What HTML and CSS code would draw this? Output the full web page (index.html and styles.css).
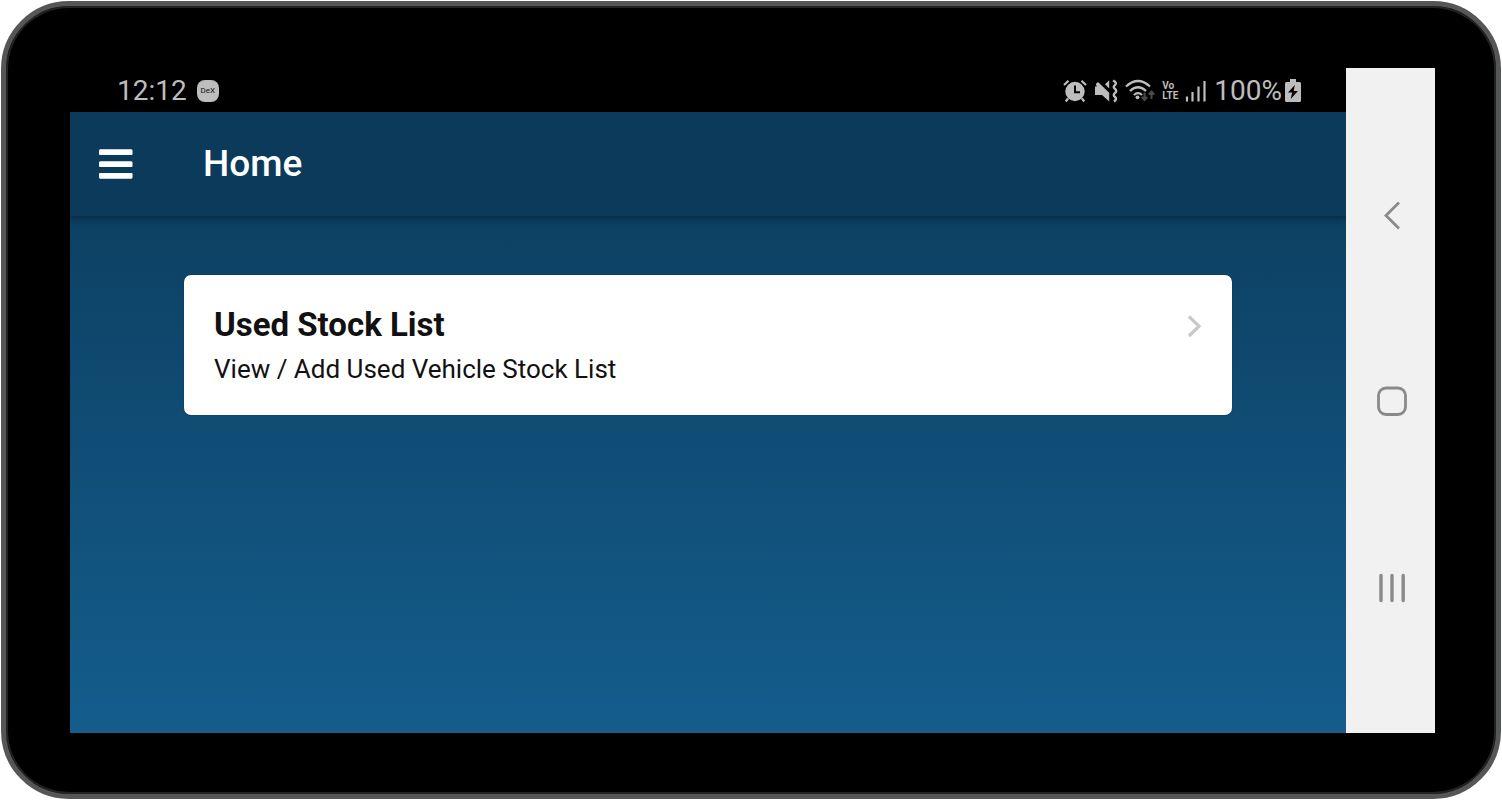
FILE: index.html
```html
<!DOCTYPE html>
<html lang="en">
<head>
<meta charset="utf-8">
<meta name="viewport" content="width=device-width, initial-scale=1">
<title>Home</title>
<link rel="stylesheet" href="styles.css">
</head>
<body>
<div class="device">
  <div class="display">
    <div class="status-bar">
      <div class="status-left">
        <span class="clock">12:12</span>
        <span class="dex">DeX</span>
      </div>
      <div class="status-right">
        <svg class="icon" width="24" height="24" viewBox="0 0 24 24" aria-label="Alarm">
          <path d="M1 6 5.500 1.700M23 6 18.500 1.700M5 19.500 2.800 22.500M19 19.500l2.200 3" stroke="currentColor" stroke-width="2.200" fill="none"/>
          <circle cx="12" cy="12.500" r="9.700" fill="currentColor"/>
          <path d="M12 6.500V13.200H17" stroke="#000" stroke-width="1.900" fill="none"/>
        </svg>
        <svg class="icon" width="24" height="24" viewBox="0 0 24 24" aria-label="Vibrate">
          <path d="M1 7.500H2.800L1.800 5 4 3 15.200 13.800V22.500L8 16H1ZM11 5.200 15.200 1.200V9.500Z" fill="currentColor"/>
          <path d="M19 1.500Q23.500 3.700 21 6 18.500 8 21 9.800 23.500 12 21 14 18.500 16 21 18 23.500 20 20 22.500" stroke="currentColor" stroke-width="2.400" fill="none"/>
        </svg>
        <svg class="icon" width="30" height="24" viewBox="0 0 30 24" aria-label="Wi-Fi">
          <path d="M1 7.500Q13 -3.500 25 7.500M5 12Q13 4.500 21 12M9 16Q13 12.300 17 16" stroke="currentColor" stroke-width="2.300" fill="none"/>
          <circle cx="12.500" cy="18.300" r="1.900" fill="currentColor"/>
          <path d="M19.500 13.500V20.500M16.800 18 19.500 21 22.200 18M26.500 20V13.500M23.800 15.500 26.500 12.500 29.200 15.500" stroke="#4a4a4a" stroke-width="2" fill="none"/>
        </svg>
        <span class="volte"><span>Vo</span><span>LTE</span></span>
        <svg class="icon" width="22" height="24" viewBox="0 0 22 24" aria-label="Signal">
          <path d="M2 17.500V22.500M7.500 13V22.500M13.500 7.500V22.500M19.500 2V22.500" stroke="currentColor" stroke-width="2.200"/>
        </svg>
        <span class="battery">
          <span class="clock">100%</span>
          <svg width="16" height="24" viewBox="0 0 16 24" aria-label="Charging">
            <path d="M5 0H11V3H14.500Q16 3 16 4.500V21.500Q16 23 14.500 23H1.500Q0 23 0 21.500V4.500Q0 3 1.500 3H5Z" fill="currentColor"/>
            <path d="M9.800 6 3 13.500H7.200L5.700 20 13 12H8.700Z" fill="#000"/>
          </svg>
        </span>
      </div>
    </div>
    <div class="app">
      <header class="toolbar">
        <button class="menu" type="button" aria-label="Menu">
          <svg width="34" height="30" viewBox="0 0 34 30">
            <path d="M1 3.200H32.500M1 15.200H32.500M1 26.800H32.500" fill="none" stroke="currentColor" stroke-width="5.600"/>
            <path d="M1 1.500H32.500V5H1ZM1 13.500H32.500V17H1ZM1 25H32.500V28.500H1Z" fill="none" stroke="currentColor" stroke-width="2" stroke-linejoin="round"/>
          </svg>
        </button>
        <h1 class="page-title">Home</h1>
      </header>
      <main class="content">
        <a class="card" href="#">
          <span class="card-text">
            <span class="card-title">Used Stock List</span>
            <span class="card-subtitle">View / Add Used Vehicle Stock List</span>
          </span>
          <svg class="chevron" width="16" height="24" viewBox="0 0 16 24">
            <path d="M3 2.500 13 12.200 3 22" fill="none" stroke="currentColor" stroke-width="3.200"/>
          </svg>
        </a>
      </main>
    </div>
  </div>
  <nav class="system-nav" aria-label="System">
    <button type="button" aria-label="Back">
      <svg width="32" height="32" viewBox="0 0 32 32"><path d="M23 3.500 10 16.500 23 29.500" fill="none" stroke="currentColor" stroke-width="2.800"/></svg>
    </button>
    <button type="button" aria-label="Home">
      <svg width="32" height="32" viewBox="0 0 32 32"><rect x="2.500" y="3" width="27" height="26.500" rx="7.500" fill="none" stroke="currentColor" stroke-width="2.800"/></svg>
    </button>
    <button type="button" aria-label="Recent apps">
      <svg width="32" height="32" viewBox="0 0 32 32"><path d="M5 4.500V29.500M16 4.500V29.500M27.200 4.500V29.500" fill="none" stroke="currentColor" stroke-width="3.400" stroke-linecap="round"/></svg>
    </button>
  </nav>
</div>
</body>
</html>
```
FILE: styles.css
```css
* {
  box-sizing: border-box;
}

body {
  margin: 0;
  min-height: 100vh;
  display: flex;
  padding: 1px;
  background: #fff;
  font-family: Roboto, "Liberation Sans", sans-serif;
}

button {
  border: 0;
  padding: 0;
  background: none;
  color: inherit;
  display: flex;
}

svg {
  display: block;
  flex: none;
}

.device {
  flex: 1;
  display: flex;
  padding: 62px 61px 61px 64px;
  background: #000;
  border: 5px solid #555756;
  border-radius: 68px;
  box-shadow: inset 0 0 0 2px #222;
}

.display {
  flex: 1;
  display: flex;
  flex-direction: column;
}

.status-bar {
  display: flex;
  justify-content: space-between;
  align-items: center;
  height: 44px;
  padding: 2px 45px 0 47px;
  color: #bdbdbd;
}

.status-left,
.status-right {
  display: flex;
  align-items: center;
}

.status-left {
  gap: 10px;
}

.status-right {
  gap: 7px;
}

.clock {
  font-size: 28px;
  line-height: 32px;
}

.dex {
  width: 22px;
  height: 22px;
  border-radius: 8px;
  background: #bdbdbd;
  color: #111;
  font-size: 8px;
  line-height: 22px;
  text-align: center;
}

.volte {
  display: flex;
  flex-direction: column;
  font-size: 10px;
  line-height: 10px;
  font-weight: 700;
}

.battery {
  display: flex;
  align-items: center;
  gap: 3px;
}

.app {
  flex: 1;
  display: flex;
  flex-direction: column;
  background: linear-gradient(#0b3a5b, #0b3a5b 104px, #0d4164 116px, #145d8d);
}

.toolbar {
  display: flex;
  align-items: center;
  gap: 70px;
  height: 104px;
  padding: 0 29px;
  color: #fff;
  background: #0b3a5b;
  box-shadow: 0 2px 6px rgba(0, 0, 0, 0.3);
  clip-path: inset(0 0 -12px 0);
}

.page-title {
  margin: 0;
  font-size: 37px;
  line-height: 44px;
  font-weight: 500;
}

.content {
  padding: 59px 114px;
}

.card {
  display: flex;
  justify-content: space-between;
  padding: 30px;
  border-radius: 7px;
  background: #fff;
  box-shadow: 0 0 1px #001a66;
  color: #111;
  text-decoration: none;
}

.card-text {
  display: flex;
  flex-direction: column;
  gap: 8px;
}

.card-title {
  font-size: 33px;
  line-height: 40px;
  font-weight: 700;
}

.card-subtitle {
  font-size: 26px;
  line-height: 32px;
}

.chevron {
  margin-top: 9px;
  color: #c8c8c8;
}

.system-nav {
  display: flex;
  flex-direction: column;
  justify-content: center;
  align-items: center;
  gap: 154px;
  width: 89px;
  padding-left: 2px;
  background: #f1f1f1;
  color: #8a8a8a;
}
```
